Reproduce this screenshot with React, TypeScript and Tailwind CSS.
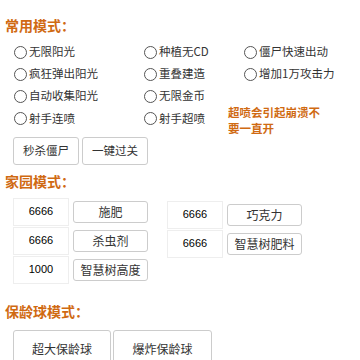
import React from "react";

const radios: { label: string; col: number; row: number }[] = [
  { label: "无限阳光", col: 1, row: 1 },
  { label: "种植无CD", col: 2, row: 1 },
  { label: "僵尸快速出动", col: 3, row: 1 },
  { label: "疯狂弹出阳光", col: 1, row: 2 },
  { label: "重叠建造", col: 2, row: 2 },
  { label: "增加1万攻击力", col: 3, row: 2 },
  { label: "自动收集阳光", col: 1, row: 3 },
  { label: "无限金币", col: 2, row: 3 },
  { label: "射手连喷", col: 1, row: 4 },
  { label: "射手超喷", col: 2, row: 4 },
];

function Radio({ label }: { label: string }) {
  return (
    <label className="flex items-center h-[22px] text-[11.5px] text-[#333] cursor-pointer">
      <span className="w-[13px] h-[13px] rounded-full border border-[#555] bg-white mr-[2px] shrink-0" />
      {label}
    </label>
  );
}

function Heading({ children }: { children: React.ReactNode }) {
  return (
    <h2 className="pl-[5px] text-[14px] leading-[20px] font-bold text-[#d06a12]">
      {children}
    </h2>
  );
}

function Field({ value, action }: { value: string; action: string }) {
  return (
    <div className="flex items-center h-[29px]">
      <div className="w-[56px] h-[28px] border border-[#eee] flex items-center justify-center text-[11px] text-black font-['Liberation_Sans',sans-serif]">
        {value}
      </div>
      <button className="ml-[4px] w-[75px] h-[22px] border border-[#ccc] rounded-[3px] bg-white text-[12px] text-[#333]">
        {action}
      </button>
    </div>
  );
}

export default function App() {
  return (
    <div className="w-[360px] h-[360px] overflow-hidden bg-white font-['Noto_Sans_CJK_SC',sans-serif]">
      <div className="pt-[15px]">
        <Heading>常用模式：</Heading>
      </div>

      {/* options */}
      <div className="mt-[6px] ml-[14px] grid grid-cols-[130px_100px_1fr] grid-rows-[22px_22px_22px_23px]">
        {radios.map((r) => (
          <div
            key={r.label}
            style={{ gridColumn: r.col, gridRow: r.row }}
            className="flex items-center"
          >
            <Radio label={r.label} />
          </div>
        ))}
        <div className="col-start-3 row-start-4 h-[22px] overflow-visible">
          <p className="-ml-[16px] -mt-[3px] w-[100px] text-[11.5px] leading-[16px] font-bold text-[#d06a12]">
            超喷会引起崩溃不要一直开
          </p>
        </div>
      </div>

      <div className="mt-[7px] ml-[13px] flex gap-[3px]">
        <button className="w-[66px] h-[28px] border border-[#ccc] rounded-[3px] bg-white text-[11.5px] text-[#333]">
          秒杀僵尸
        </button>
        <button className="w-[66px] h-[28px] border border-[#ccc] rounded-[3px] bg-white text-[11.5px] text-[#333]">
          一键过关
        </button>
      </div>

      <div className="mt-[6px]">
        <Heading>家园模式：</Heading>
      </div>

      <div className="mt-[6px] ml-[13px] flex">
        <div className="w-[154px]">
          <Field value="6666" action="施肥" />
          <Field value="6666" action="杀虫剂" />
          <Field value="1000" action="智慧树高度" />
        </div>
        <div className="mt-[3px]">
          <Field value="6666" action="巧克力" />
          <Field value="6666" action="智慧树肥料" />
        </div>
      </div>

      <div className="mt-[17px]">
        <Heading>保龄球模式：</Heading>
      </div>

      <div className="mt-[9px] ml-[13px] flex gap-[2px]">
        <button className="w-[98px] h-[38px] border border-[#ccc] rounded-[3px] bg-white text-[12px] text-[#333]">
          超大保龄球
        </button>
        <button className="w-[99px] h-[38px] border border-[#ccc] rounded-[3px] bg-white text-[12px] text-[#333]">
          爆炸保龄球
        </button>
      </div>
    </div>
  );
}
